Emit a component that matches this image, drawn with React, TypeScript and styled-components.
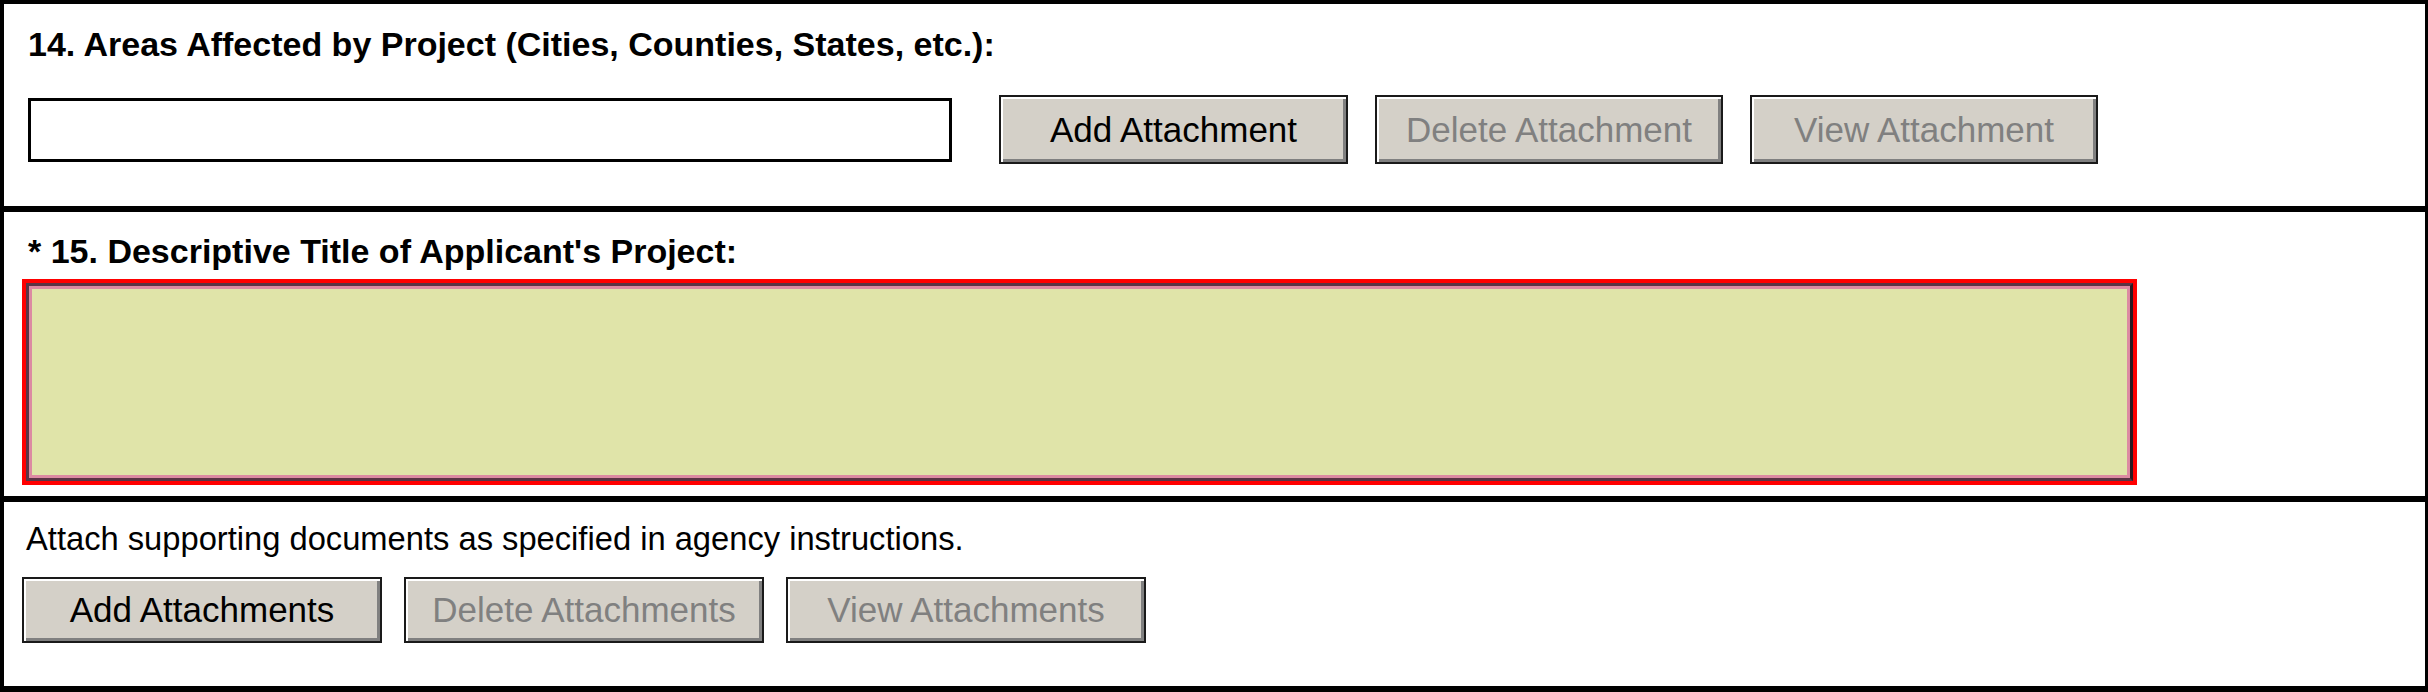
import React from 'react';
import styled, { createGlobalStyle } from 'styled-components';

const GlobalStyle = createGlobalStyle`
  html, body {
    margin: 0;
    padding: 0;
    background: #ffffff;
  }
  * {
    box-sizing: border-box;
  }
`;

const FormFrame = styled.div`
  width: 2428px;
  height: 692px;
  display: flex;
  flex-direction: column;
  border-style: solid;
  border-color: #000000;
  border-width: 4px 3px 6px 4px;
  font-family: 'Liberation Sans', Arial, sans-serif;
  color: #000000;
`;

const Section = styled.div<{ $top: number; $bottom: number; $divider?: boolean }>`
  display: flex;
  flex-direction: column;
  padding: ${(p) => p.$top}px 18px ${(p) => p.$bottom}px 18px;
  border-bottom: ${(p) => (p.$divider ? '6px solid #000000' : 'none')};
`;

const FieldLabel = styled.div`
  font-size: 34px;
  font-weight: bold;
  line-height: 39px;
  margin-left: 6px;
  white-space: nowrap;
`;

const Instructions = styled.div`
  font-size: 32.7px;
  line-height: 38px;
  margin-left: 4px;
  white-space: nowrap;
`;

const ControlRow = styled.div<{ $gap: number; $top: number }>`
  display: flex;
  align-items: center;
  gap: ${(p) => p.$gap}px;
  margin-top: ${(p) => p.$top}px;
`;

const TextInput = styled.div`
  width: 924px;
  height: 64px;
  margin-left: 6px;
  margin-right: 20px;
  border: 3px solid #000000;
  background: #ffffff;
`;

const TitleArea = styled.div`
  width: 2115px;
  height: 206px;
  margin-top: 8px;
  border: 4px solid #ff0000;
  padding: 0;
  display: flex;
`;

const TitleInner = styled.div`
  flex: 1;
  border-style: solid;
  border-width: 3px;
  border-color: #5a3445 #2a1a22 #5a3445 #5a3445;
  display: flex;
`;

const TitleFill = styled.div`
  flex: 1;
  border: 3px solid #dc8aa2;
  background: #e0e4a9;
`;

const ActionButton = styled.div<{ $width: number; $height: number; $disabled?: boolean }>`
  width: ${(p) => p.$width}px;
  height: ${(p) => p.$height}px;
  display: flex;
  align-items: center;
  justify-content: center;
  background: #d4d0c8;
  border: 2px solid #1a1a1a;
  box-shadow: inset 2px 2px 0 #ffffff, inset -3px -3px 0 #808080;
  font-size: 35px;
  color: ${(p) => (p.$disabled ? '#808080' : '#000000')};
  white-space: nowrap;
`;

const App = (): JSX.Element => {
  return (
    <>
      <GlobalStyle />
      <FormFrame>
        <Section $top={21} $bottom={42} $divider>
          <FieldLabel>14. Areas Affected by Project (Cities, Counties, States, etc.):</FieldLabel>
          <ControlRow $gap={27} $top={31}>
            <TextInput />
            <ActionButton $width={349} $height={69}>Add Attachment</ActionButton>
            <ActionButton $width={348} $height={69} $disabled>
              Delete Attachment
            </ActionButton>
            <ActionButton $width={348} $height={69} $disabled>
              View Attachment
            </ActionButton>
          </ControlRow>
        </Section>
        <Section $top={20} $bottom={11} $divider>
          <FieldLabel>* 15. Descriptive Title of Applicant's Project:</FieldLabel>
          <TitleArea>
            <TitleInner>
              <TitleFill />
            </TitleInner>
          </TitleArea>
        </Section>
        <Section $top={18} $bottom={0}>
          <Instructions>Attach supporting documents as specified in agency instructions.</Instructions>
          <ControlRow $gap={22} $top={19}>
            <ActionButton $width={360} $height={66}>Add Attachments</ActionButton>
            <ActionButton $width={360} $height={66} $disabled>
              Delete Attachments
            </ActionButton>
            <ActionButton $width={360} $height={66} $disabled>
              View Attachments
            </ActionButton>
          </ControlRow>
        </Section>
      </FormFrame>
    </>
  );
};

export default App;
